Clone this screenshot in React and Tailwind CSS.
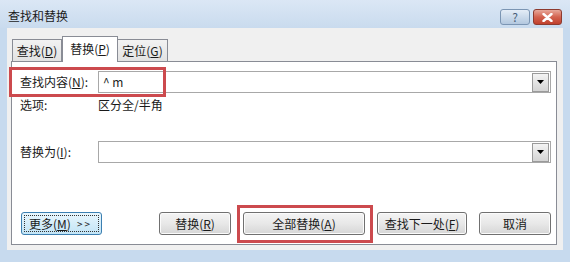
import React from "react";

const font = { fontFamily: '"Noto Sans CJK SC", "Noto Sans", sans-serif' };

function DropArrow() {
  return (
    <div className="w-[17px] h-[19px] mr-[1px] border border-[#9a9a9a] bg-gradient-to-b from-[#f4f4f4] to-[#d4d4d4] flex items-center justify-center">
      <svg width="7" height="4" viewBox="0 0 7 4">
        <path d="M0 0h7L3.5 4z" fill="#000" />
      </svg>
    </div>
  );
}

function ComboInput({ children }) {
  return (
    <div className="flex-1 h-[22px] border border-[#a8a8a8] bg-white flex items-center">
      <div className="flex-1 pl-[4px] text-[12px] text-[#222]">{children}</div>
      <DropArrow />
    </div>
  );
}

function Btn({ w, children }) {
  return (
    <div
      className={`${w} h-[23px] rounded-[3px] border border-[#707070] bg-gradient-to-b from-[#f4f4f4] via-[#e8e8e8] to-[#d6d6d6] flex items-center justify-center text-[12px] text-[#1a1a1a] shadow-[inset_0_0_0_1px_#fbfbfb]`}
    >
      {children}
    </div>
  );
}

export default function App() {
  return (
    <div className="w-[570px] h-[262px] bg-[#c7daee] flex flex-col overflow-hidden" style={font}>
      {/* title bar */}
      <div className="h-[28px] flex bg-gradient-to-b from-[#dbe7f5] to-[#c9dbee]">
        <div className="flex-1 pl-[8px] pt-[7px] text-[12px] text-[#1b1b1b]">查找和替换</div>
        <div className="flex gap-[3px] pt-[9px] pr-[8px]">
          <div className="w-[30px] h-[16px] rounded-[3px] border border-[#7b95b3] bg-gradient-to-b from-[#e4edf7] to-[#b3c8df] flex items-center justify-center text-[12px] leading-none text-[#4a5f78]">
            ?
          </div>
          <div className="w-[29px] h-[16px] rounded-[3px] border border-[#8d3a2e] bg-gradient-to-b from-[#e6a89b] via-[#d3624f] to-[#c0402c] flex items-center justify-center">
            <svg width="11" height="9" viewBox="0 0 11 9">
              <path d="M1.5 1l8 7M9.5 1l-8 7" stroke="#fff" strokeWidth="2.4" strokeLinecap="round" />
            </svg>
          </div>
        </div>
      </div>

      {/* client area */}
      <div className="mx-[7px] h-[222px] bg-[#f0f0f0] flex flex-col pt-[8px] pl-[4px] pr-[6px] pb-[5px]">
        {/* tabs */}
        <div className="flex items-end h-[25px] pl-[1px]">
          <div className="w-[50px] h-[22px] border border-b-0 border-[#898c95] bg-gradient-to-b from-[#f2f2f2] to-[#e2e2e2] flex items-center justify-center text-[12px] text-[#1a1a1a]">
            查找(<u>D</u>)
          </div>
          <div className="w-[56px] h-[26px] -mb-[1px] border border-b-0 border-[#898c95] bg-white flex items-start pt-[3px] justify-center text-[12px] text-[#1a1a1a] relative z-10">
            替换(<u>P</u>)
          </div>
          <div className="w-[50px] h-[22px] border border-b-0 border-l-0 border-[#898c95] bg-gradient-to-b from-[#f2f2f2] to-[#e2e2e2] flex items-center justify-center text-[12px] text-[#1a1a1a]">
            定位(<u>G</u>)
          </div>
        </div>

        {/* panel */}
        <div className="flex-1 border border-[#898c95] bg-white relative flex flex-col pt-[9px] pl-[8px] pr-[5px] text-[12px] text-[#1a1a1a]">
          <div className="flex items-center h-[22px]">
            <div className="w-[78px]">
              查找内容(<u>N</u>):
            </div>
            <ComboInput>^ m</ComboInput>
          </div>

          <div className="flex items-center h-[18px] mt-[3px]">
            <div className="w-[78px]">选项:</div>
            <div>区分全/半角</div>
          </div>

          <div className="flex items-center h-[22px] mt-[27px]">
            <div className="w-[78px]">
              替换为(<u>I</u>):
            </div>
            <ComboInput />
          </div>

          <div className="flex items-center h-[23px] mt-[49px] pl-[1px]">
            <div className="w-[81px] h-[23px] rounded-[3px] border border-[#3c7fb1] bg-gradient-to-b from-[#e8f6fd] to-[#c2e4f6] p-[2px]">
              <div className="w-full h-full border border-dotted border-[#333] flex items-center pl-[4px] text-[12px]">
                更多(<u>M</u>)<span className="ml-[6px] text-[10px] tracking-[2px]">&gt;&gt;</span>
              </div>
            </div>
            <div className="ml-auto flex gap-[12px]">
              <Btn w="w-[72px]">
                替换(<u>R</u>)
              </Btn>
              <Btn w="w-[122px]">
                全部替换(<u>A</u>)
              </Btn>
              <Btn w="w-[90px]">
                查找下一处(<u>F</u>)
              </Btn>
              <Btn w="w-[72px]">取消</Btn>
            </div>
          </div>

          {/* red annotation boxes */}
          <div className="absolute left-[-3px] top-[5px] w-[157px] h-[30px] border-[3px] border-[#cc4a4e] pointer-events-none" />
          <div className="absolute left-[225px] top-[143px] w-[136px] h-[38px] border-[3px] border-[#cc4a4e] pointer-events-none" />
        </div>
      </div>

      <div className="flex-1" />
    </div>
  );
}
